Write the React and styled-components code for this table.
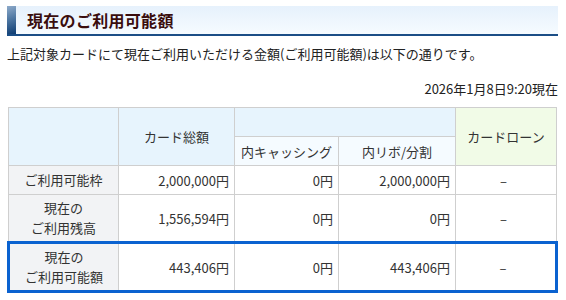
import React from "react";
import styled, { createGlobalStyle } from "styled-components";

const Global = createGlobalStyle`
  body {
    margin: 0;
    background: #fff;
    font-family: "Noto Sans CJK JP", "Noto Sans", sans-serif;
    color: #222;
  }
`;

const Page = styled.div`
  width: 551px;
  padding: 6px 8px 0 7px;
`;

const TitleBar = styled.div`
  display: flex;
  align-items: center;
  height: 28px;
  background: linear-gradient(to bottom, #e6f1fc, #f6fbff);
  border-bottom: 2px solid #1b4e86;
`;

const TitleMark = styled.div`
  width: 9px;
  align-self: stretch;
  background: linear-gradient(160deg, #8eaaca 0%, #4f78a3 45%, #0d3c72 100%);
`;

const Title = styled.h2`
  margin: 0 0 0 11px;
  font-size: 16px;
  font-weight: bold;
  color: #3a0d0d;
  letter-spacing: 0.3px;
`;

const Lead = styled.p`
  margin: 8px 0 0;
  font-size: 13px;
  line-height: 20px;
  color: #222;
`;

const Stamp = styled.div`
  margin-top: 16px;
  text-align: right;
  font-size: 13px;
  line-height: 18px;
  color: #222;
`;

const Table = styled.table`
  margin-top: 9px;
  width: 100%;
  border-collapse: collapse;
  table-layout: fixed;
  font-size: 13px;
  color: #333;
`;

const Th = styled.th`
  border: 1px solid #cfcfcf;
  font-weight: normal;
  height: 28px;
  padding: 0;
  background: ${({ $tone }) =>
    $tone === "green" ? "#f1fbe7" : $tone === "pale" ? "#f5fbff" : "#e7f4fd"};
`;

const Row = styled.tr`
  ${({ $focus }) => $focus && "border: 3px solid #0a62d0;"}
`;

const Label = styled.td`
  border: 1px solid #cfcfcf;
  background: #f2f3f5;
  text-align: center;
  line-height: 20px;
  height: ${({ $h }) => $h}px;
  padding: 0;
`;

const Num = styled.td`
  border: 1px solid #cfcfcf;
  text-align: ${({ $center }) => ($center ? "center" : "right")};
  padding: 0 5px 0 0;
  background: #fff;
`;

const rows = [
  { label: ["ご利用可能枠"], total: "2,000,000円", cash: "0円", revo: "2,000,000円", h: 28 },
  { label: ["現在の", "ご利用残高"], total: "1,556,594円", cash: "0円", revo: "0円", h: 46 },
  { label: ["現在の", "ご利用可能額"], total: "443,406円", cash: "0円", revo: "443,406円", h: 46, focus: true },
];

export default function App() {
  return (
    <Page>
      <Global />
      <TitleBar>
        <TitleMark />
        <Title>現在のご利用可能額</Title>
      </TitleBar>
      <Lead>上記対象カードにて現在ご利用いただける金額(ご利用可能額)は以下の通りです。</Lead>
      <Stamp>2026年1月8日9:20現在</Stamp>
      <Table>
        <colgroup>
          <col style={{ width: 110 }} />
          <col style={{ width: 116 }} />
          <col style={{ width: 104 }} />
          <col style={{ width: 117 }} />
          <col />
        </colgroup>
        <thead>
          <tr>
            <Th rowSpan={2} />
            <Th rowSpan={2}>カード総額</Th>
            <Th colSpan={2} />
            <Th rowSpan={2} $tone="green">カードローン</Th>
          </tr>
          <tr>
            <Th $tone="pale">内キャッシング</Th>
            <Th $tone="pale">内リボ/分割</Th>
          </tr>
        </thead>
        <tbody>
          {rows.map((r) => (
            <Row key={r.label.join("")} $focus={r.focus}>
              <Label $h={r.h}>
                {r.label.map((l) => (
                  <div key={l}>{l}</div>
                ))}
              </Label>
              <Num>{r.total}</Num>
              <Num>{r.cash}</Num>
              <Num>{r.revo}</Num>
              <Num $center>–</Num>
            </Row>
          ))}
        </tbody>
      </Table>
    </Page>
  );
}
